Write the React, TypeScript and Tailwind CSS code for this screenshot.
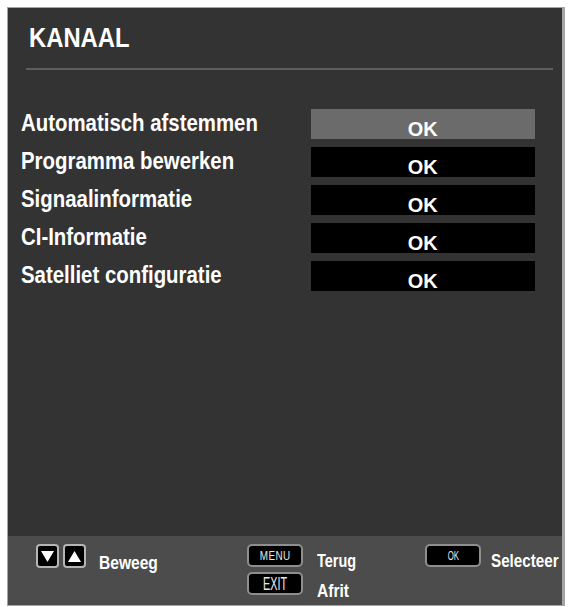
import React from "react";

const font = { fontFamily: '"Liberation Sans", Arial, sans-serif' };

function Sq({ children }: { children: string }) {
  return <span className="inline-block origin-left scale-x-[0.85] whitespace-nowrap">{children}</span>;
}

function ArrowKey({ up }: { up?: boolean }) {
  return (
    <div className="flex h-[24px] w-[23px] shrink-0 items-center justify-center rounded-[4px] border-2 border-[#b5b5b5] bg-black">
      <svg width="15" height="13" viewBox="0 0 15 13">
        {up ? <polygon points="7.5,1 14,12 1,12" fill="#fff" /> : <polygon points="1,1 14,1 7.5,12" fill="#fff" />}
      </svg>
    </div>
  );
}

function Key({ label, cls }: { label: string; cls: string }) {
  return (
    <div className="flex h-[23px] w-[56px] shrink-0 items-center justify-center rounded-[5px] border-2 border-[#8e8e8e] bg-black font-normal text-[#e8e8e8]">
      <span className={"inline-block origin-center leading-none " + cls}>{label}</span>
    </div>
  );
}

const rows = [
  "Automatisch afstemmen",
  "Programma bewerken",
  "Signaalinformatie",
  "CI-Informatie",
  "Satelliet configuratie",
];

export default function App() {
  return (
    <div className="min-h-[607px] w-[574px] bg-white pl-[7px] pt-[7px]" style={font}>
      <div className="flex h-[599px] w-[558px] flex-col border border-r-[3px] border-[#a4a4a4] bg-[#333333]">
        <div className="pl-[21px] pt-[16px] text-[28px] font-bold leading-[28px] text-white">
          <Sq>KANAAL</Sq>
        </div>
        <div className="ml-[18px] mr-[9px] mt-[16px] h-[2px] bg-[#5e5e5e]" />
        <div className="mt-[39px] flex flex-col gap-[8px]">
          {rows.map((r, i) => (
            <div key={r} className="flex h-[30px] items-center">
              <div className="w-[303px] shrink-0 pl-[13px] text-[24px] font-bold leading-[30px] text-white">
                <span className="inline-block origin-left -translate-y-[1px] scale-x-[0.85] whitespace-nowrap">{r}</span>
              </div>
              <div
                className={
                  "flex h-[30px] w-[224px] shrink-0 items-center justify-center pt-[8px] text-[21px] font-bold leading-none text-white " +
                  (i === 0 ? "bg-[#6b6b6b]" : "bg-black")
                }
              >
                <span className="inline-block scale-x-[0.95]">OK</span>
              </div>
            </div>
          ))}
        </div>
        <div className="flex-1" />
        <div className="flex h-[69px] items-start bg-[#4c4c4c] pl-[28px] pt-[8px] text-[19px] font-bold leading-none text-white">
          <div className="flex w-[211px] shrink-0 items-start">
            <div className="flex gap-[4px]">
              <ArrowKey />
              <ArrowKey up />
            </div>
            <div className="ml-[13px] mt-[9px]">
              <span className="inline-block origin-left scale-x-[0.82] whitespace-nowrap">Beweeg</span>
            </div>
          </div>
          <div className="flex w-[178px] shrink-0 items-start">
            <div className="flex flex-col gap-[5px]">
              <Key label="MENU" cls="text-[13px] scale-x-[0.76] tracking-[0.5px]" />
              <Key label="EXIT" cls="text-[19px] scale-x-[0.57]" />
            </div>
            <div className="ml-[14px] mt-[7px] flex flex-col gap-[11px]">
              <span className="inline-block origin-left scale-x-[0.76] whitespace-nowrap">Terug</span>
              <span className="inline-block origin-left scale-x-[0.82] whitespace-nowrap">Afrit</span>
            </div>
          </div>
          <div className="flex min-w-0 items-start">
            <div className="h-[24px]">
              <Key label="OK" cls="text-[13px] scale-x-[0.6]" />
            </div>
            <div className="ml-[10px] mt-[7px]">
              <span className="inline-block origin-left scale-x-[0.8] whitespace-nowrap">Selecteer</span>
            </div>
          </div>
        </div>
      </div>
    </div>
  );
}
